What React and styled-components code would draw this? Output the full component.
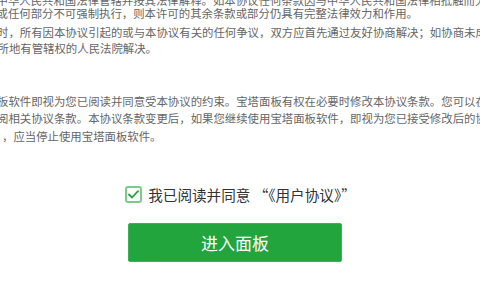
import React from "react";
import styled, { createGlobalStyle } from "styled-components";

const GlobalStyle = createGlobalStyle`
  html, body {
    margin: 0;
    padding: 0;
    background: #ffffff;
  }
  body {
    font-family: "Liberation Sans", "Noto Sans CJK SC", sans-serif;
  }
`;

const Page = styled.div`
  width: 480px;
  height: 300px;
  overflow: hidden;
  background: #ffffff;
  display: flex;
  flex-direction: column;
`;

const Agreement = styled.div`
  margin-top: -7.5px;
  color: #666666;
  font-size: 11.4px;
  line-height: 17px;
`;

const Line = styled.div`
  white-space: nowrap;
  margin-top: ${(p) => p.$gap || 0}px;
  margin-left: ${(p) => p.$shift || 0}px;
`;

const Footer = styled.div`
  display: flex;
  flex-direction: column;
  align-items: center;
  margin-top: 38px;
  gap: 19px;
`;

const AgreeRow = styled.label`
  display: flex;
  align-items: center;
  gap: 6px;
  height: 20px;
  font-family: "Noto Sans CJK SC", sans-serif;
  font-size: 14.6px;
  color: #333333;
  cursor: pointer;
  margin-left: 1px;
`;

const CheckBox = styled.span`
  box-sizing: border-box;
  width: 17px;
  height: 17px;
  border: 2px solid #7ccb89;
  border-radius: 3px;
  background: #ffffff;
  display: flex;
  align-items: center;
  justify-content: center;
`;

const EnterButton = styled.button`
  width: 214px;
  height: 39px;
  margin-right: 10px;
  border: 1px solid #3fb055;
  border-radius: 2px;
  background: #22a53c;
  color: #ffffff;
  font-family: "Liberation Sans", "Noto Sans CJK SC", sans-serif;
  font-size: 17px;
  cursor: pointer;
`;

const lines = [
  { shift: -3.5, gap: 0, text: "中华人民共和国法律管辖并按其法律解释。如本协议任何条款因与中华人民共和国法律相抵触而无效，或者本协议的" },
  { shift: -3.5, gap: -4, text: "或任何部分不可强制执行，则本许可的其余条款或部分仍具有完整法律效力和作用。" },
  { shift: -3, gap: 2, text: "时，所有因本协议引起的或与本协议有关的任何争议，双方应首先通过友好协商解决；如协商未成，任何一方均可" },
  { shift: -2.5, gap: -0.5, text: "所地有管辖权的人民法院解决。" },
  { shift: -3, gap: 36, text: "板软件即视为您已阅读并同意受本协议的约束。宝塔面板有权在必要时修改本协议条款。您可以在相关页面中" },
  { shift: -3, gap: -0.5, text: "阅相关协议条款。本协议条款变更后，如果您继续使用宝塔面板软件，即视为您已接受修改后的协议。" },
  { shift: 2, gap: 1.5, text: "，应当停止使用宝塔面板软件。" },
];

export default function App() {
  return (
    <>
      <GlobalStyle />
      <Page>
        <Agreement>
          {lines.map((l, i) => (
            <Line key={i} $shift={l.shift} $gap={l.gap}>
              {l.text}
            </Line>
          ))}
        </Agreement>
        <Footer>
          <AgreeRow>
            <CheckBox>
              <svg width="11" height="9" viewBox="0 0 11 9" fill="none">
                <path d="M1 4.5 L4 7.5 L10 1.2" stroke="#20a53a" strokeWidth="1.8" strokeLinecap="round" strokeLinejoin="round" />
              </svg>
            </CheckBox>
            <span>我已阅读并同意 “《用户协议》”</span>
          </AgreeRow>
          <EnterButton>进入面板</EnterButton>
        </Footer>
      </Page>
    </>
  );
}
